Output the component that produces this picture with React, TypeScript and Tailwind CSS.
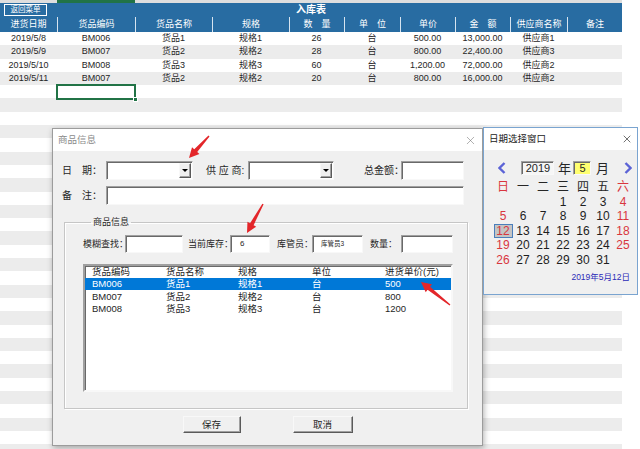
import { X } from 'lucide-react';

// 入库表 columns (px): 进货日期 … 备注
const GRID = 'grid grid-cols-[57px_78px_77px_77px_55px_56px_55px_55px_57px_55px]';

const heads = ['进货日期', '货品编码', '货品名称', '规格', '数　量', '单　位', '单价', '金　额', '供应商名称', '备注'];

const entries = [
  ['2019/5/8', 'BM006', '货品1', '规格1', '26', '台', '500.00', '13,000.00', '供应商1', ''],
  ['2019/5/9', 'BM007', '货品2', '规格2', '28', '台', '800.00', '22,400.00', '供应商3', ''],
  ['2019/5/10', 'BM008', '货品3', '规格3', '60', '台', '1,200.00', '72,000.00', '供应商2', ''],
  ['2019/5/11', 'BM007', '货品2', '规格2', '20', '台', '800.00', '16,000.00', '供应商2', ''],
];

const sheetRows = [...entries, ...Array.from({ length: 28 }, () => Array(10).fill(''))];

const goods = [
  ['BM006', '货品1', '规格1', '台', '500'],
  ['BM007', '货品2', '规格2', '台', '800'],
  ['BM008', '货品3', '规格3', '台', '1200'],
];

const weeks: (number | null)[][] = [
  [null, null, null, 1, 2, 3, 4],
  [5, 6, 7, 8, 9, 10, 11],
  [12, 13, 14, 15, 16, 17, 18],
  [19, 20, 21, 22, 23, 24, 25],
  [26, 27, 28, 29, 30, 31, null],
];

// win classic 3d edges (background set per use)
const sunken =
  'border border-t-[#a0a0a0] border-l-[#a0a0a0] border-b-[#f8f8f8] border-r-[#f8f8f8] shadow-[inset_1px_1px_0_#696969]';
const raised =
  'bg-[#f0f0f0] border border-t-[#f8f8f8] border-l-[#f8f8f8] border-b-[#5a5a5a] border-r-[#5a5a5a] shadow-[inset_-1px_-1px_0_#a0a0a0]';

function Combo({ w }: { w: string }) {
  return (
    <div className={`${sunken} bg-white ${w} h-[19px] flex justify-end p-[1px]`}>
      <div className={`${raised} w-[12px] h-full flex items-center justify-center`}>
        <div className="w-0 h-0 border-l-[3px] border-r-[3px] border-t-[3px] border-l-transparent border-r-transparent border-t-black" />
      </div>
    </div>
  );
}

// red hand-drawn style pointer, tip at (x2, y2)
function arrowPoints(x1: number, y1: number, x2: number, y2: number) {
  const len = Math.hypot(x2 - x1, y2 - y1);
  const ux = (x2 - x1) / len;
  const uy = (y2 - y1) / len;
  const nx = -uy;
  const ny = ux;
  const bx = x2 - ux * 10;
  const by = y2 - uy * 10;
  const pt = (x: number, y: number, w: number) => `${x + nx * w},${y + ny * w}`;
  return [
    pt(x1, y1, 0.7),
    pt(bx, by, 2),
    pt(bx, by, 5),
    `${x2},${y2}`,
    pt(bx, by, -5),
    pt(bx, by, -2),
    pt(x1, y1, -0.7),
  ].join(' ');
}

function Chevron({ dir }: { dir: 'l' | 'r' }) {
  return (
    <svg width="8" height="12" viewBox="0 0 8 12">
      <path
        d={dir === 'l' ? 'M6.5 1 L1.5 6 L6.5 11' : 'M1.5 1 L6.5 6 L1.5 11'}
        fill="none"
        stroke="#5b63d6"
        strokeWidth="2.4"
      />
    </svg>
  );
}

export default function App() {
  return (
    <div className="relative w-[640px] h-[449px] overflow-hidden bg-white font-['Liberation_Sans','Noto_Sans_CJK_SC',sans-serif] text-[#262626]">
      {/* excel sheet */}
      <div className="flex h-[3px] w-[622px] bg-[#dedede]">
        <div className="w-[57px]" />
        <div className="w-[78px] bg-[#217346]" />
      </div>
      <div className="grid grid-cols-[1fr_auto_1fr] items-center h-[14px] w-[622px] bg-[#286ca2]">
        <div>
          <div className="ml-[4px] w-[43px] h-[12px] border border-white text-white text-[7.5px] leading-none flex items-center justify-center">
            返回菜单
          </div>
        </div>
        <div className="text-white font-bold text-[10px] leading-none">入库表</div>
        <div />
      </div>
      <div className={`${GRID} h-[15px] w-[622px] bg-[#286ca2]`}>
        {heads.map((h, i) => (
          <div
            key={h}
            className={`flex items-center justify-center text-white text-[9px] leading-none ${i ? 'border-l border-[#d6e4f0]' : ''}`}
          >
            {h}
          </div>
        ))}
      </div>
      {sheetRows.map((r, ri) => (
        <div key={ri} className={`${GRID} h-[13.3px] w-[622px] ${ri % 2 ? 'bg-[#ececec]' : 'bg-white'}`}>
          {r.map((c, ci) => (
            <div key={ci} className="relative flex items-center justify-center text-[9px] leading-none">
              {c}
              {ri === 4 && ci === 1 && (
                <div className="absolute -top-[1px] -left-[1px] -right-[1px] -bottom-[2px] border-2 border-[#217346]">
                  <div className="absolute -right-[4px] -bottom-[4px] w-[5px] h-[5px] bg-[#217346] border border-white" />
                </div>
              )}
            </div>
          ))}
        </div>
      ))}

      {/* 商品信息 dialog */}
      <div className="absolute left-[52px] top-[128px] w-[431px] h-[318px] border border-[#9c9c9c] bg-[#f0f0f0] shadow-[1px_2px_6px_rgba(0,0,0,0.3)] flex flex-col">
        <div className="h-[22px] bg-white flex items-center justify-between pl-[5px] pr-[5px]">
          <span className="text-[9.5px] leading-none text-[#8a8a8a]">商品信息</span>
          <X size={13} strokeWidth={1} color="#707070" />
        </div>
        <div className="flex flex-col pl-[9px] pt-[10px] text-[10px] leading-none">
          <div className="flex items-center h-[19px]">
            <span className="w-[44px] whitespace-nowrap">日　期：</span>
            <Combo w="w-[87px]" />
            <span className="ml-[13px] w-[42px] whitespace-nowrap">供 应 商:</span>
            <Combo w="w-[86px]" />
            <span className="ml-[30px] w-[37px] whitespace-nowrap">总金额：</span>
            <div className={`${sunken} bg-white w-[63px] h-[19px]`} />
          </div>
          <div className="flex items-center h-[19px] mt-[6px]">
            <span className="w-[44px] whitespace-nowrap">备　注：</span>
            <div className={`${sunken} bg-white w-[358px] h-[19px]`} />
          </div>
          <fieldset className="ml-[2px] mt-[11px] w-[404px] h-[193px] border border-[#c6c6c6] shadow-[1px_1px_0_#fff,inset_1px_1px_0_#fff] pl-[18px] pt-[7px] text-[9px]">
            <legend className="ml-[8px] px-[2px] text-[9px] leading-[12px]">商品信息</legend>
            <div className="flex items-center h-[18px]">
              <span className="w-[42px] whitespace-nowrap">模糊查找：</span>
              <div className={`${sunken} bg-white w-[58px] h-[18px]`} />
              <span className="ml-[5px] w-[42px] whitespace-nowrap">当前库存：</span>
              <div className={`${sunken} bg-white w-[40px] h-[18px] flex items-center pl-[9px] text-[8px]`}>6</div>
              <span className="ml-[7px] w-[35px] whitespace-nowrap">库管员：</span>
              <div className={`${sunken} bg-white w-[51px] h-[18px] flex items-center pl-[8px] text-[6.5px]`}>库管员3</div>
              <span className="ml-[7px] w-[31px] whitespace-nowrap">数量：</span>
              <div className={`${sunken} bg-white w-[52px] h-[18px]`} />
            </div>
            <div className={`${sunken} bg-white mt-[11px] w-[370px] h-[128px] border-2 border-t-[#a0a0a0] border-l-[#a0a0a0] text-[9.5px]`}>
              <div className="grid grid-cols-[74px_72px_74px_73px_1fr] h-[12px] items-center">
                {['货品编码', '货品名称', '规格', '单位', '进货单价(元)'].map((h) => (
                  <span key={h} className="pl-[7px] whitespace-nowrap">{h}</span>
                ))}
              </div>
              {goods.map((g, gi) => (
                <div
                  key={g[0]}
                  className={`grid grid-cols-[74px_72px_74px_73px_1fr] h-[12.3px] items-center ${gi === 0 ? 'bg-[#0078d7] text-white' : ''}`}
                >
                  {g.map((c, ci) => (
                    <span key={ci} className="pl-[7px]">{c}</span>
                  ))}
                </div>
              ))}
            </div>
          </fieldset>
          <div className="flex justify-center gap-[52px] mt-[7px] pr-[9px]">
            <div className={`${raised} w-[58px] h-[17px] flex items-center justify-center text-[9.5px]`}>保存</div>
            <div className={`${raised} w-[60px] h-[17px] flex items-center justify-center text-[9.5px]`}>取消</div>
          </div>
        </div>
      </div>

      {/* 日期选择窗口 */}
      <div className="absolute left-[483px] top-[127px] w-[155px] h-[168px] border border-[#7aa4d0] bg-[#f0f0f0] flex flex-col">
        <div className="h-[22px] bg-white flex items-center justify-between pl-[5px] pr-[4px]">
          <span className="text-[9.5px] leading-none text-[#222]">日期选择窗口</span>
          <X size={12} strokeWidth={1.2} color="#111" />
        </div>
        <div className="flex items-center h-[14px] mt-[11px] pl-[14px]">
          <Chevron dir="l" />
          <div className={`${sunken} bg-[#f6f6f6] ml-[15px] w-[33px] h-[14px] flex items-center justify-center pl-[1px] text-[11px] leading-none`}>
            2019
          </div>
          <span className="ml-[4px] text-[13px] leading-none">年</span>
          <div className={`${sunken} bg-[#ffff70] ml-[2px] w-[18px] h-[14px] flex items-center justify-center pl-[1px] text-[11px] leading-none`}>
            5
          </div>
          <span className="ml-[5px] text-[13px] leading-none">月</span>
          <span className="ml-[15px] flex">
            <Chevron dir="r" />
          </span>
        </div>
        <div className="ml-[9px] mt-[5px] grid grid-cols-[repeat(7,20px)] text-[12px] leading-none">
          {['日', '一', '二', '三', '四', '五', '六'].map((d, i) => (
            <div key={d} className={`h-[14.5px] flex items-center justify-center ${i % 6 === 0 ? 'text-[#d9363e]' : ''}`}>
              {d}
            </div>
          ))}
          {weeks.flat().map((n, i) => (
            <div
              key={i}
              className={`h-[14.5px] flex items-center justify-center ${i % 7 === 0 || i % 7 === 6 ? 'text-[#d9363e]' : 'text-[#1e1e1e]'}`}
            >
              {n === 12 ? (
                <span className="w-[19px] h-[14px] bg-[#c4c4c4] border border-[#4a7ebb] flex items-center justify-center">12</span>
              ) : (
                n
              )}
            </div>
          ))}
        </div>
        <div className="mt-[5px] pr-[7px] text-right text-[8.5px] leading-[10px] text-[#2b2bb8]">2019年5月12日</div>
      </div>

      {/* annotation arrows */}
      <svg className="absolute inset-0 pointer-events-none" width="640" height="449">
        <polygon points={arrowPoints(209, 136, 189, 158)} fill="#e3262a" />
        <polygon points={arrowPoints(263, 204, 247, 233)} fill="#e3262a" />
        <polygon points={arrowPoints(450, 305, 421, 282)} fill="#e3262a" />
      </svg>
    </div>
  );
}
